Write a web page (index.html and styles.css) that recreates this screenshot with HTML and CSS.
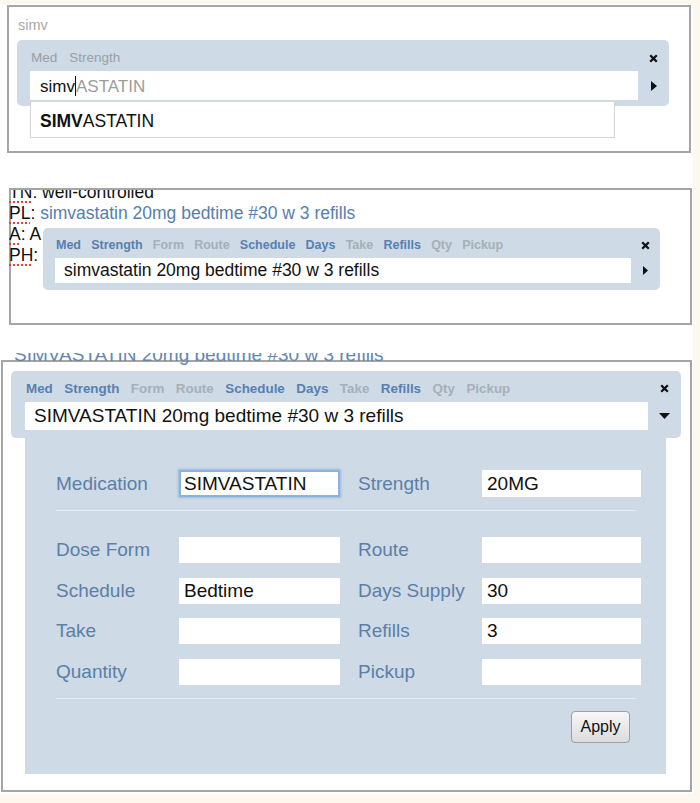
FILE: index.html
```html
<!DOCTYPE html>
<html lang="en">
<head>
<meta charset="utf-8">
<title>Medication entry</title>
<link rel="stylesheet" href="styles.css">
</head>
<body>
<div class="sheet">

  <section class="panel panel-search">
    <div class="query">simv</div>
    <div class="editor editor-search">
      <div class="tabs tabs-search"><span>Med</span><span>Strength</span></div>
      <span class="ctl"><svg width="9" height="9" viewBox="0 0 9 9"><path d="M1.2 1.2 L7.8 7.8 M7.8 1.2 L1.2 7.8" stroke="#111" stroke-width="2.3" fill="none"/></svg></span>
      <div class="entry entry-search"><span>simv</span><span class="caret"></span><span class="hint">ASTATIN</span></div>
      <span class="ctl"><svg width="6" height="10" viewBox="0 0 6 10"><polygon points="0,0 6,5 0,10" fill="#111"/></svg></span>
      <div class="suggest"><b>SIMV</b>ASTATIN</div>
    </div>
  </section>

  <section class="panel panel-note">
    <div class="note">
      <div class="note-lines">
        <p><span class="spell"><span class="cut">H</span>TN</span>: well-controlled</p>
        <p><span class="spell">PL</span>: <span class="link">simvastatin 20mg bedtime #30 w 3 refills</span></p>
        <p><span class="spell"><span class="cut">D</span>A</span>: A</p>
        <p><span class="spell">PH</span>: none</p>
      </div>
    </div>
    <div class="editor editor-note">
      <div class="tabs tabs-note"><span class="on">Med</span><span class="on">Strength</span><span class="off">Form</span><span class="off">Route</span><span class="on">Schedule</span><span class="on">Days</span><span class="off">Take</span><span class="on">Refills</span><span class="off">Qty</span><span class="off">Pickup</span></div>
      <span class="ctl"><svg width="9" height="9" viewBox="0 0 9 9"><path d="M1.2 1.2 L7.8 7.8 M7.8 1.2 L1.2 7.8" stroke="#111" stroke-width="2.3" fill="none"/></svg></span>
      <div class="entry entry-note">simvastatin 20mg bedtime #30 w 3 refills</div>
      <span class="ctl"><svg width="5" height="9" viewBox="0 0 5 9"><polygon points="0,0 5,4.5 0,9" fill="#111"/></svg></span>
    </div>
  </section>

  <div class="ghost"><span>SIMVASTATIN 20mg bedtime #30 w 3 refills</span></div>
  <section class="panel panel-rx">
    <div class="editor editor-rx">
      <div class="tabs tabs-rx"><span class="on">Med</span><span class="on">Strength</span><span class="off">Form</span><span class="off">Route</span><span class="on">Schedule</span><span class="on">Days</span><span class="off">Take</span><span class="on">Refills</span><span class="off">Qty</span><span class="off">Pickup</span></div>
      <span class="ctl"><svg width="9" height="9" viewBox="0 0 9 9"><path d="M1.2 1.2 L7.8 7.8 M7.8 1.2 L1.2 7.8" stroke="#111" stroke-width="2.3" fill="none"/></svg></span>
      <div class="entry entry-rx">SIMVASTATIN 20mg bedtime #30 w 3 refills</div>
      <span class="ctl"><svg width="11" height="6" viewBox="0 0 11 6"><polygon points="0,0 11,0 5.5,6" fill="#111"/></svg></span>
    </div>
    <div class="form">
      <div class="grid row1">
        <span class="label">Medication</span><span class="field focus">SIMVASTATIN</span>
        <span class="label right">Strength</span><span class="field">20MG</span>
      </div>
      <div class="rule"></div>
      <div class="grid rows">
        <span class="label">Dose Form</span><span class="field"></span>
        <span class="label right">Route</span><span class="field"></span>
        <span class="label">Schedule</span><span class="field">Bedtime</span>
        <span class="label right">Days Supply</span><span class="field">30</span>
        <span class="label">Take</span><span class="field"></span>
        <span class="label right">Refills</span><span class="field">3</span>
        <span class="label">Quantity</span><span class="field"></span>
        <span class="label right">Pickup</span><span class="field"></span>
      </div>
      <div class="rule rule2"></div>
      <div class="actions"><button class="apply" type="button">Apply</button></div>
    </div>
  </section>

</div>
</body>
</html>
```

FILE: styles.css
```css
* { box-sizing: border-box; }
html, body { margin: 0; padding: 0; }
body {
  background: #fcf8ee;
  font-family: "Liberation Sans", Arial, sans-serif;
  color: #111;
}
.sheet {
  width: 693px;
  height: 790px;
  margin-top: 4px;
  padding-top: 1px;
  background: #fff;
}
.panel {
  border: 2px solid #a5a5a5;
  background: #fff;
}

/* panel 1 */
.panel-search {
  margin-left: 7px;
  width: 684px;
  height: 148px;
  padding: 9px 0 0 8px;
}
.query {
  font-size: 14.5px;
  line-height: 18px;
  color: #a9a9a9;
  margin-left: 1px;
}

/* shared editor box */
.editor {
  position: relative;
  display: grid;
  align-items: center;
  row-gap: 4px;
  background: #cedae5;
  border-radius: 5px;
}
.tabs {
  display: flex;
  padding-left: 1px;
  white-space: nowrap;
}
.tabs .on { color: #5680b3; }
.tabs .off { color: #a7afb8; }
.ctl {
  display: flex;
  justify-content: center;
  align-items: center;
}
.ctl svg { display: block; }
.entry {
  background: #fff;
  white-space: nowrap;
  overflow: hidden;
  color: #111;
}

.editor-search {
  margin-top: 6px;
  width: 652px;
  grid-template-columns: 608px 31px;
  padding: 9px 0 6px 13px;
}
.tabs-search {
  font-size: 13.5px;
  line-height: 18px;
  gap: 12px;
  color: #9a9fa5;
}
.entry-search {
  height: 29px;
  font-size: 17px;
  line-height: 26px;
  padding: 3px 0 0 10px;
}
.hint { color: #9d9d9d; }
.caret {
  display: inline-block;
  width: 1px;
  height: 20px;
  background: #111;
  vertical-align: -4px;
}
.suggest {
  position: absolute;
  left: 13px;
  top: 61px;
  width: 585px;
  height: 37px;
  background: #fff;
  border: 1px solid #d6d6d6;
  font-size: 17.5px;
  line-height: 32px;
  padding: 3px 0 0 9px;
}

/* panel 2 */
.panel-note {
  position: relative;
  margin: 35px 0 0 9px;
  width: 683px;
  height: 137px;
}
.note {
  margin-left: -2px;
  height: 100%;
  overflow: hidden;
  font-size: 17.5px;
  line-height: 21px;
}
.note-lines { margin-top: -8px; }
.note p { margin: 0; white-space: nowrap; }
.cut { margin-left: -12.6px; }
.spell {
  text-decoration: underline dotted #e2433f;
  text-decoration-thickness: 1.5px;
  text-underline-offset: 3px;
}
.link { color: #5580ad; }
.editor-note {
  position: absolute;
  left: 32px;
  top: 38px;
  width: 617px;
  grid-template-columns: 576px 29px;
  padding: 8px 0 7px 12px;
}
.tabs-note {
  font-size: 12.5px;
  font-weight: bold;
  line-height: 18px;
  gap: 10.2px;
}
.entry-note {
  height: 25px;
  font-size: 17.5px;
  line-height: 25px;
  padding-left: 9px;
}

/* panel 3 */
.ghost {
  margin: 28px 0 -6px 14px;
  height: 13px;
  overflow: hidden;
  font-size: 19px;
  line-height: 22px;
  color: #6386b0;
  white-space: nowrap;
}
.ghost span { display: block; margin-top: -9.5px; }
.panel-rx {
  margin-left: 1px;
  width: 691px;
  height: 432px;
}
.editor-rx {
  margin: 9px 0 0 8px;
  width: 670px;
  grid-template-columns: 623px 33px;
  padding: 8px 0 8px 14px;
}
.tabs-rx {
  font-size: 13.4px;
  font-weight: bold;
  line-height: 19px;
  gap: 11.5px;
}
.entry-rx {
  height: 28px;
  font-size: 19px;
  line-height: 28px;
  padding-left: 9px;
}

.form {
  margin-left: 22px;
  width: 641px;
  background: #cedae5;
  padding: 32px 25px 31px 31px;
}
.grid {
  display: grid;
  grid-template-columns: 123px 161px 142px 159px;
  align-items: center;
}
.row1 { grid-auto-rows: 27px; }
.rows { grid-auto-rows: 26px; row-gap: 14.5px; }
.label {
  font-size: 19px;
  line-height: 22px;
  color: #5b7fa9;
  white-space: nowrap;
}
.label.right { padding-left: 18px; }
.field {
  height: 100%;
  display: flex;
  align-items: center;
  background: #fff;
  font-size: 19px;
  padding-left: 5px;
  color: #111;
}
.field.focus {
  box-shadow: inset 0 0 0 2px #8db2dd, 0 0 2px 1px rgba(120, 165, 220, 0.6);
}
.rule {
  height: 1px;
  background: #e6edf3;
  margin: 13px 5px 26px 0;
}
.rule2 { margin: 13.5px 5px 12px 0; }
.actions {
  display: flex;
  justify-content: flex-end;
  padding-right: 11px;
}
.apply {
  width: 59px;
  height: 32px;
  padding: 0;
  font-family: "Liberation Sans", Arial, sans-serif;
  font-size: 16px;
  color: #111;
  border: 1px solid #a0a0a0;
  border-radius: 4px;
  background: linear-gradient(#f7f7f7, #dcdcdc);
}
```
